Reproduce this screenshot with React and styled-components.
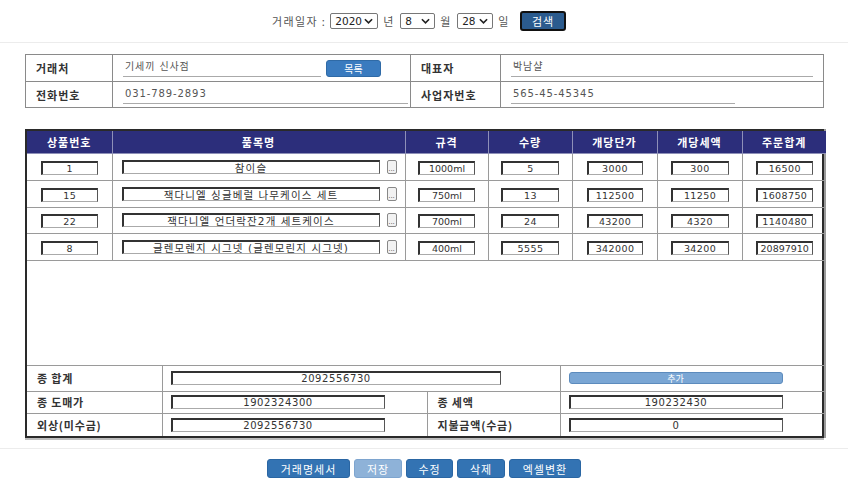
import React from "react";
import styled, { createGlobalStyle } from "styled-components";

const chevron = encodeURIComponent(
  '<svg xmlns="http://www.w3.org/2000/svg" width="10" height="6" viewBox="0 0 10 6"><path d="M1 1l4 4 4-4" fill="none" stroke="#222" stroke-width="1.8"/></svg>'
);

const Global = createGlobalStyle`
  html, body { margin: 0; padding: 0; background: #fff; }
  body { font-family: "DejaVu Sans", "Noto Sans CJK KR", sans-serif; color: #333; }
  * { box-sizing: border-box; }
`;

const Page = styled.div`
  width: 848px;
  display: flex;
  flex-direction: column;
`;

const TopBar = styled.div`
  height: 43px;
  display: flex;
  align-items: center;
  justify-content: center;
  border-bottom: 1px solid #ececec;
  font-family: "Noto Sans CJK KR", sans-serif;
  font-size: 11px;
  color: #555;
  padding: 0 10px 1px 0;
`;

const Label = styled.span`
  margin: ${(p) => p.$m || "0 6px 0 5px"};
  letter-spacing: ${(p) => p.$ls || 0.8}px;
`;

const Select = styled.select`
  appearance: none;
  -webkit-appearance: none;
  font-family: "DejaVu Sans", sans-serif;
  font-size: 10.5px;
  height: 16px;
  width: ${(p) => p.$w}px;
  padding: 0 0 0 4px;
  border: 1px solid #777;
  border-radius: 2px;
  color: #222;
  background: #fff url("data:image/svg+xml;utf8,${chevron}") no-repeat right 4px center;
  background-size: 9px 6px;
`;

const SearchBtn = styled.button`
  margin-left: 5px;
  width: 46px;
  height: 20px;
  background: #2b5b8e;
  color: #fff;
  border: 2px solid #111;
  border-radius: 3px;
  font-family: "Noto Sans CJK KR", sans-serif;
  font-size: 11px;
  letter-spacing: 1px;
  padding: 0;
`;

const InfoTable = styled.table`
  margin: 11px 0 0 25px;
  width: 798px;
  border-collapse: collapse;
  table-layout: fixed;
  td {
    border: 1px solid #8a8a8a;
    font-size: 11px;
    padding: 0 0 0 10px;
  }
`;

const InfoRow = styled.tr`
  height: ${(p) => p.$h}px;
`;

const InfoLabel = styled.td`
  font-family: "Noto Sans CJK KR", sans-serif;
  font-weight: bold;
  color: #333;
  letter-spacing: 1px;
`;

const InfoValueWrap = styled.div`
  display: flex;
  align-items: center;
  gap: 5px;
`;

const Underlined = styled.div`
  width: ${(p) => p.$w}px;
  border-bottom: 1px solid #aaa;
  padding: 0 0 1px 2px;
  color: #555;
  font-size: 10px;
  letter-spacing: 0.9px;
  line-height: 16px;
`;

const SmallBtn = styled.button`
  width: 55px;
  height: 17px;
  background: #3a7bbf;
  border: 1px solid #2f6aa6;
  border-radius: 3px;
  color: #fff;
  font-family: "Noto Sans CJK KR", sans-serif;
  font-size: 10px;
  padding: 0;
`;

const Frame = styled.div`
  margin: 21px 0 0 25px;
  width: 799px;
  height: 309px;
  border: 2px solid #2a2a2a;
  box-shadow: 2px 0 0 #9a9a9a, 0 2px 0 #bdbdbd;
  display: flex;
  flex-direction: column;
  justify-content: space-between;
`;

const ItemTable = styled.table`
  width: 100%;
  border-collapse: collapse;
  table-layout: fixed;
  td, th {
    border: 1px solid #9a9a9a;
    padding: 0;
    text-align: center;
  }
  tr > :first-child { border-left: none; }
  tr > :last-child { border-right: none; }
`;

const HeadCell = styled.th`
  background: #2c2e7b;
  color: #fff;
  font-family: "Noto Sans CJK KR", sans-serif;
  font-size: 11px;
  font-weight: bold;
  height: 22px;
  letter-spacing: 1px;
  border-top: none !important;
  border-color: #8e90b8 !important;
`;

const ItemRow = styled.tr`
  height: ${(p) => p.$h}px;
`;

const Box = styled.input`
  width: ${(p) => p.$w}px;
  height: 14px;
  padding: 0 1px;
  border-style: solid;
  border-width: 2px 1px 1px 2px;
  border-color: #333 #555 #aaa #333;
  font-family: "DejaVu Sans", "Noto Sans CJK KR", sans-serif;
  font-size: ${(p) => p.$fs || 9.5}px;
  line-height: 11px;
  text-align: center;
  color: #333;
  background: #fff;
  letter-spacing: ${(p) => p.$ls ?? 0.4}px;
  vertical-align: middle;
  outline: none;
`;

const NameWrap = styled.div`
  display: flex;
  align-items: center;
  justify-content: flex-start;
  padding-left: 9px;
  gap: 7px;
`;

const DotBtn = styled.span`
  width: 10px;
  height: 14px;
  border: 1px solid #888;
  border-radius: 2px;
  background: #f2f2f2;
  font-size: 7px;
  color: #555;
  line-height: 17px;
  text-align: center;
`;

const SumTable = styled.table`
  width: 100%;
  border-collapse: collapse;
  table-layout: fixed;
  td {
    border: 1px solid #9a9a9a;
    padding: 0 0 0 8px;
    font-size: 11px;
  }
  tr:last-child td { border-bottom: none; }
  tr > :first-child { border-left: none; }
  tr > :last-child { border-right: none; }
`;

const SumLabel = styled.td`
  font-family: "Noto Sans CJK KR", sans-serif;
  font-weight: bold;
  letter-spacing: 0.8px;
  color: #333;
  && { padding-left: 10px; }
`;

const AddBtn = styled.button`
  width: 214px;
  height: 12px;
  display: block;
  background: #7aa6d4;
  border: 1px solid #5c8bbd;
  border-radius: 3px;
  color: #fff;
  font-family: "Noto Sans CJK KR", sans-serif;
  font-size: 9px;
  line-height: 9px;
  padding: 0;
`;

const BottomBar = styled.div`
  margin-top: 10px;
  border-top: 1px solid #ececec;
  padding-top: 10px;
  display: flex;
  justify-content: center;
  gap: 4px;
`;

const ActionBtn = styled.button`
  width: ${(p) => p.$w}px;
  height: 19px;
  background: ${(p) => (p.$light ? "#8eb2d8" : "#3373b3")};
  border: 1px solid ${(p) => (p.$light ? "#7ea5cf" : "#2a66a3")};
  border-radius: 3px;
  color: #fff;
  font-family: "Noto Sans CJK KR", sans-serif;
  font-size: 11px;
  letter-spacing: 1px;
  padding: 0;
`;

const items = [
  { no: "1", name: "참이슬", size: "1000ml", qty: "5", price: "3000", tax: "300", total: "16500" },
  { no: "15", name: "잭다니엘 싱글베럴 나무케이스 세트", size: "750ml", qty: "13", price: "112500", tax: "11250", total: "1608750" },
  { no: "22", name: "잭다니엘 언더락잔2개 세트케이스", size: "700ml", qty: "24", price: "43200", tax: "4320", total: "1140480" },
  { no: "8", name: "글렌모렌지 시그넷 (글렌모린지 시그넷)", size: "400ml", qty: "5555", price: "342000", tax: "34200", total: "20897910" },
];

const heads = [
  ["상품번호", 85], ["품목명", 293], ["규격", 83], ["수량", 84], ["개당단가", 85], ["개당세액", 85], ["주문합계", 84],
];

export default function App() {
  return (
    <>
      <Global />
      <Page>
        <TopBar>
          <Label $m="0 4px 0 0" $ls={1.4}>거래일자 :</Label>
          <Select $w={48} defaultValue="2020"><option>2020</option></Select>
          <Label>년</Label>
          <Select $w={35} defaultValue="8"><option>8</option></Select>
          <Label>월</Label>
          <Select $w={36} defaultValue="28"><option>28</option></Select>
          <Label>일</Label>
          <SearchBtn>검색</SearchBtn>
        </TopBar>

        <InfoTable>
          <colgroup>
            <col style={{ width: 87 }} />
            <col style={{ width: 298 }} />
            <col style={{ width: 90 }} />
            <col style={{ width: 323 }} />
          </colgroup>
          <tbody>
            <InfoRow $h={27}>
              <InfoLabel>거래처</InfoLabel>
              <td>
                <InfoValueWrap>
                  <Underlined $w={198}>기세끼 신사점</Underlined>
                  <SmallBtn>목록</SmallBtn>
                </InfoValueWrap>
              </td>
              <InfoLabel>대표자</InfoLabel>
              <td><Underlined $w={302}>박남샬</Underlined></td>
            </InfoRow>
            <InfoRow $h={26}>
              <InfoLabel>전화번호</InfoLabel>
              <td><Underlined $w={285}>031-789-2893</Underlined></td>
              <InfoLabel>사업자번호</InfoLabel>
              <td><Underlined $w={224}>565-45-45345</Underlined></td>
            </InfoRow>
          </tbody>
        </InfoTable>

        <Frame>
          <ItemTable>
            <colgroup>
              {heads.map(([h, w]) => <col key={h} style={{ width: w }} />)}
            </colgroup>
            <thead>
              <tr>{heads.map(([h]) => <HeadCell key={h}>{h}</HeadCell>)}</tr>
            </thead>
            <tbody>
              {items.map((it, i) => (
                <ItemRow key={it.no} $h={i === 2 ? 26 : 27}>
                  <td><Box $w={57} readOnly value={it.no} /></td>
                  <td>
                    <NameWrap>
                      <Box $w={258} $fs={10.5} $ls={1.1} readOnly value={it.name} />
                      <DotBtn>...</DotBtn>
                    </NameWrap>
                  </td>
                  <td><Box $w={57} $ls={0} readOnly value={it.size} /></td>
                  <td><Box $w={58} readOnly value={it.qty} /></td>
                  <td><Box $w={56} readOnly value={it.price} /></td>
                  <td><Box $w={58} readOnly value={it.tax} /></td>
                  <td><Box $w={57} $ls={it.total.length > 7 ? 0 : 0.4} readOnly value={it.total} /></td>
                </ItemRow>
              ))}
            </tbody>
          </ItemTable>

          <SumTable>
            <colgroup>
              <col style={{ width: 135 }} />
              <col style={{ width: 265 }} />
              <col style={{ width: 133 }} />
              <col style={{ width: 266 }} />
            </colgroup>
            <tbody>
              <ItemRow $h={26}>
                <SumLabel>종 합계</SumLabel>
                <td colSpan={2}><Box $w={330} $fs={10} $ls={0.6} readOnly value="2092556730" /></td>
                <td><AddBtn>추가</AddBtn></td>
              </ItemRow>
              <ItemRow $h={22}>
                <SumLabel>종 도매가</SumLabel>
                <td><Box $w={214} $fs={10} $ls={0.6} readOnly value="1902324300" /></td>
                <SumLabel>종 세액</SumLabel>
                <td><Box $w={214} $fs={10} $ls={0.6} readOnly value="190232430" /></td>
              </ItemRow>
              <ItemRow $h={23}>
                <SumLabel>외상(미수금)</SumLabel>
                <td><Box $w={214} $fs={10} $ls={0.6} readOnly value="2092556730" /></td>
                <SumLabel>지불금액(수금)</SumLabel>
                <td><Box $w={214} $fs={10} $ls={0.6} readOnly value="0" /></td>
              </ItemRow>
            </tbody>
          </SumTable>
        </Frame>

        <BottomBar>
          <ActionBtn $w={83}>거래명세서</ActionBtn>
          <ActionBtn $w={48} $light>저장</ActionBtn>
          <ActionBtn $w={47}>수정</ActionBtn>
          <ActionBtn $w={48}>삭제</ActionBtn>
          <ActionBtn $w={72}>엑셀변환</ActionBtn>
        </BottomBar>
      </Page>
    </>
  );
}
